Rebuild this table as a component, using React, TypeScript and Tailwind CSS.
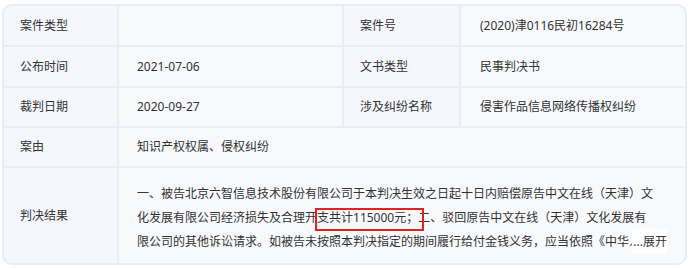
const FONT = { fontFamily: '"Noto Sans", "Noto Sans CJK SC", sans-serif' }

function Label({ children, className = '' }: { children?: React.ReactNode; className?: string }) {
  return (
    <div className={`flex items-center pl-4 bg-[#f5f7fd] ${className}`}>
      {children}
    </div>
  )
}

function Value({ children, className = '' }: { children?: React.ReactNode; className?: string }) {
  return (
    <div className={`flex items-center bg-[#f8f9fb] ${className}`}>
      {children}
    </div>
  )
}

export default function App() {
  return (
    <div className="w-[690px] h-[270px] bg-white pt-[4px] pl-[2px] text-[12px] text-[#333]" style={FONT}>
      <div className="w-[685px] grid grid-cols-[113px_223px_115px_1fr] gap-[2px] bg-[#e8edf6] border-2 border-[#e8edf6] rounded-[10px] overflow-hidden">
        {/* row 1 */}
        <Label className="h-[39px]">案件类型</Label>
        <Value className="h-[39px] pl-[18px]" />
        <Label className="h-[39px]">案件号</Label>
        <Value className="h-[39px] pl-[19px]">(2020)津0116民初16284号</Value>

        {/* row 2 */}
        <Label className="h-[39px]">公布时间</Label>
        <Value className="h-[39px] pl-[18px]">2021-07-06</Value>
        <Label className="h-[39px]">文书类型</Label>
        <Value className="h-[39px] pl-[19px]">民事判决书</Value>

        {/* row 3 */}
        <Label className="h-[38px]">裁判日期</Label>
        <Value className="h-[38px] pl-[18px]">2020-09-27</Value>
        <Label className="h-[38px]">涉及纠纷名称</Label>
        <Value className="h-[38px] pl-[19px]">侵害作品信息网络传播权纠纷</Value>

        {/* row 4 */}
        <Label className="h-[38px]">案由</Label>
        <Value className="h-[38px] pl-[18px] col-span-3">知识产权权属、侵权纠纷</Value>

        {/* row 5 */}
        <Label className="h-[95px]">判决结果</Label>
        <div className="col-span-3 h-[95px] bg-[#f8f9fb] pl-[18px] pr-[18px] pt-[14px]">
          <div className="relative h-[72px] overflow-hidden">
            <p className="pr-[12px] leading-[24px]">
              一、被告北京六智信息技术股份有限公司于本判决生效之日起十日内赔偿原告中文在线（天津）文化发展有限公司经济损失及合理开
              <span className="relative inline-block">
                支共计115000元；
                <span className="absolute -left-[2px] -right-[6px] top-[2px] -bottom-[1px] border-2 border-[#e3211f]" />
              </span>
              二、驳回原告中文在线（天津）文化发展有限公司的其他诉讼请求。如被告未按照本判决指定的期间履行给付金钱义务，应当依照《中华人民共和国民事诉讼法》第二百五十三条之规定，加倍支付迟延履行期间的债务利息。
            </p>
            <span className="absolute right-0 bottom-0 h-[24px] leading-[24px] bg-white pl-[1px]">...展开</span>
          </div>
        </div>
      </div>
    </div>
  )
}
